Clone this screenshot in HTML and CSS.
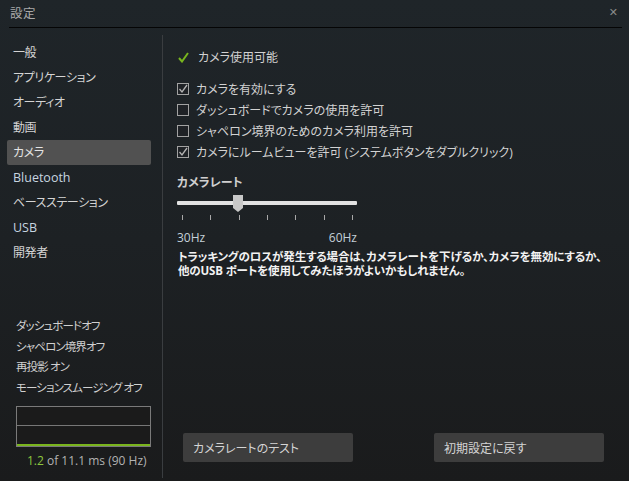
FILE: index.html
```html
<!DOCTYPE html>
<html lang="ja">
<head>
<meta charset="utf-8">
<title>設定</title>
<link rel="stylesheet" href="styles.css">
</head>
<body>
<div class="window">
  <header class="titlebar">
    <span class="title">設定</span>
    <span class="close">✕</span>
  </header>
  <div class="rule"></div>
  <div class="main">
    <nav class="sidebar">
      <ul class="menu">
        <li class="item">一般</li>
        <li class="item">アプリケーション</li>
        <li class="item">オーディオ</li>
        <li class="item">動画</li>
        <li class="item active">カメラ</li>
        <li class="item latin">Bluetooth</li>
        <li class="item">ベースステーション</li>
        <li class="item latin">USB</li>
        <li class="item">開発者</li>
      </ul>
      <ul class="status">
        <li>ダッシュボードオフ</li>
        <li>シャペロン境界オフ</li>
        <li>再投影 オン</li>
        <li>モーションスムージング オフ</li>
      </ul>
      <div class="graph">
        <div class="graph-half"></div>
        <div class="graph-half lower"></div>
      </div>
      <div class="timing"><span class="ok">1.2</span> of 11.1 ms (90 Hz)</div>
    </nav>
    <section class="content">
      <div class="ready">
        <svg class="tick-icon" width="11" height="11" viewBox="0 0 11 11"><path d="M1 6 L4 9.5 L10 1" fill="none" stroke="#78b51e" stroke-width="2"/></svg>
        <span>カメラ使用可能</span>
      </div>
      <ul class="checks">
        <li class="check"><span class="box on"><svg width="10" height="10" viewBox="0 0 10 10"><path d="M1.5 5 L4 8 L9 1" fill="none" stroke="#b4b4b4" stroke-width="1.3"/></svg></span>カメラを有効にする</li>
        <li class="check"><span class="box"></span>ダッシュボードでカメラの使用を許可</li>
        <li class="check"><span class="box"></span>シャペロン境界のためのカメラ利用を許可</li>
        <li class="check"><span class="box on"><svg width="10" height="10" viewBox="0 0 10 10"><path d="M1.5 5 L4 8 L9 1" fill="none" stroke="#b4b4b4" stroke-width="1.3"/></svg></span>カメラにルームビューを許可 (システムボタンをダブルクリック)</li>
      </ul>
      <h3 class="rate-label">カメラレート</h3>
      <div class="slider">
        <div class="track"></div>
        <svg class="thumb" width="10" height="17" viewBox="0 0 10 17"><polygon points="0,0 10,0 10,13 5,17 0,13" fill="#c8c8c8"/></svg>
      </div>
      <div class="ticks">
        <span></span><span></span><span></span><span></span><span></span><span></span><span></span>
      </div>
      <div class="range"><span>30Hz</span><span>60Hz</span></div>
      <p class="warning">トラッキングのロスが発生する場合は、カメラレートを下げるか、カメラを無効にするか、<br>他のUSB ポートを使用してみたほうがよいかもしれません。</p>
      <div class="buttons">
        <button class="btn">カメラレートのテスト</button>
        <button class="btn">初期設定に戻す</button>
      </div>
    </section>
  </div>
</div>
</body>
</html>
```

FILE: styles.css
```css
* { box-sizing: border-box; }
html, body { margin: 0; padding: 0; }
body {
  width: 629px;
  height: 481px;
  overflow: hidden;
  background: linear-gradient(to bottom, #1f2529 0%, #1d2124 50%, #1a1b1c 100%);
  font-family: "Open Sans", "Noto Sans CJK JP", sans-serif;
  font-feature-settings: "palt";
  font-size: 12px;
  color: #d2d2d2;
}
ul { list-style: none; margin: 0; padding: 0; }
.window { display: flex; flex-direction: column; height: 481px; }
.titlebar {
  height: 27px;
  display: flex;
  align-items: center;
  justify-content: space-between;
  padding: 0 11px 2px 10px;
}
.title { font-size: 12.5px; color: #a9a9a9; letter-spacing: 0.5px; }
.close { font-size: 11px; font-weight: bold; color: #8a8a8a; font-family: "DejaVu Sans", sans-serif; }
.rule { height: 1px; background: #050505; margin: 0 7px 0 9px; }
.main { flex: 1; display: flex; }
.sidebar {
  width: 163px;
  margin-top: 7px;
  border-right: 1px solid #3a3d40;
  padding-top: 5px;
  margin-bottom: 3px;
}
.menu { margin-left: 7px; width: 144px; }
.item {
  height: 25px;
  line-height: 25px;
  padding-left: 6px;
  color: #d4d4d4;
  white-space: nowrap;
  border-radius: 2px;
  letter-spacing: -0.4px;
}
.item.latin { color: #c7d6e0; font-size: 12.5px; letter-spacing: 0; }
.item.active { background: #515151; color: #e4e4e4; }
.status { margin: 51px 0 0 16px; }
.status li { height: 20.7px; line-height: 20.7px; color: #d0d0d0; white-space: nowrap; font-size: 11.5px; letter-spacing: -0.9px; }
.graph {
  margin: 7px 0 0 16px;
  width: 135px;
  height: 41px;
  border: 1px solid #7a7a7a;
  background: #1b1b1b;
  display: flex;
  flex-direction: column;
}
.graph-half { flex: 1; }
.graph-half.lower { border-top: 1px solid #777; border-bottom: 2px solid #7ab51d; }
.timing { margin: 5px 0 0 27px; color: #b2b2b2; font-size: 12px; white-space: nowrap; }
.timing .ok { color: #8cc63f; }
.content { flex: 1; padding-left: 14px; padding-top: 20px; }
.ready { display: flex; align-items: center; height: 18px; }
.tick-icon { margin-left: 1px; margin-right: 9px; }
.checks { margin-top: 12px; }
.check { display: flex; align-items: center; height: 21px; white-space: nowrap; color: #d2d2d2; }
.box {
  width: 12px; height: 12px;
  border: 1px solid #a2a2a2;
  background: #1f2226;
  margin-right: 7px;
  display: flex; align-items: center; justify-content: center;
  flex: none;
}
.rate-label { margin: 12px 0 0 0; font-size: 12px; font-weight: bold; color: #cfcfcf; height: 18px; line-height: 18px; }
.slider { position: relative; width: 180px; height: 17px; margin-top: 4px; }
.track { position: absolute; left: 0; top: 5px; width: 180px; height: 4px; background: #e2e2e2; border-radius: 1px; }
.thumb { position: absolute; left: 56px; top: -1px; }
.ticks { display: flex; justify-content: space-between; width: 171px; margin: 2px 0 0 5px; height: 6px; }
.ticks span { width: 1px; height: 5px; background: #a8a8a8; }
.range { display: flex; justify-content: space-between; width: 180px; margin-top: 8px; color: #c4d0d8; height: 18px; line-height: 18px; font-size: 12px; }
.warning { margin: 3px 0 0 1px; font-weight: bold; color: #f2f2f2; font-size: 11.5px; line-height: 14px; white-space: nowrap; letter-spacing: -0.15px; }
.buttons { display: flex; justify-content: space-between; width: 421px; margin: 155px 0 0 6px; }
.btn {
  width: 170px; height: 29px;
  background: #3d3d3d;
  border: none; border-radius: 2px;
  color: #d4d4d4;
  font-family: inherit; font-feature-settings: "palt"; font-size: 12px;
  text-align: left;
  padding: 0 10px;
}
```
